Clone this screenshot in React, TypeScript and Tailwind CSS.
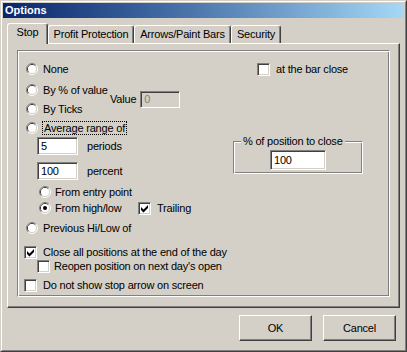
function Radio({ checked = false }: { checked?: boolean }) {
  return (
    <svg width="12" height="12" viewBox="0 0 12 12" className="block shrink-0">
      <path d="M2.11 9.89 A5.5 5.5 0 0 1 9.89 2.11" fill="none" stroke="#808080" />
      <path d="M9.89 2.11 A5.5 5.5 0 0 1 2.11 9.89" fill="none" stroke="#ffffff" />
      <path d="M2.82 9.18 A4.5 4.5 0 0 1 9.18 2.82" fill="none" stroke="#404040" />
      <path d="M9.18 2.82 A4.5 4.5 0 0 1 2.82 9.18" fill="none" stroke="#d4d0c8" />
      <circle cx="6" cy="6" r="4" fill="#ffffff" />
      {checked && <circle cx="6" cy="6" r="2" fill="#000000" />}
    </svg>
  );
}

function Check({ checked = false }: { checked?: boolean }) {
  return (
    <span className="block w-[13px] h-[13px] shrink-0 bg-white border border-t-[#808080] border-l-[#808080] border-r-white border-b-white shadow-[inset_1px_1px_0_#404040,inset_-1px_-1px_0_#d4d0c8]">
      {checked && (
        <svg width="11" height="11" viewBox="0 0 11 11" className="block">
          <polygon points="2,4 4.5,6.5 9,2 9,5 4.5,9.5 2,7" fill="#000000" />
        </svg>
      )}
    </span>
  );
}

function Edit({ value, className = '', disabled = false }: { value: string; className?: string; disabled?: boolean }) {
  return (
    <div
      className={`flex items-center pl-[3px] shrink-0 border border-t-[#808080] border-l-[#808080] border-r-white border-b-white shadow-[inset_1px_1px_0_#404040,inset_-1px_-1px_0_#d4d0c8] ${
        disabled ? 'bg-[#d4d0c8] text-[#808080]' : 'bg-white'
      } ${className}`}
    >
      {value}
    </div>
  );
}

function Tab({ label, active = false, className = '' }: { label: string; active?: boolean; className?: string }) {
  return (
    <div
      className={`flex justify-center pt-[2px] bg-[#d4d0c8] border-t border-l border-r border-white border-r-[#404040] rounded-t-[3px] shadow-[inset_-1px_0_0_#808080] whitespace-nowrap ${
        active ? 'h-[21px] -mb-px relative z-10' : 'h-[18px]'
      } ${className}`}
    >
      {label}
    </div>
  );
}

function Button({ children }: { children: React.ReactNode }) {
  return (
    <button className="w-[73px] h-[26px] flex items-center justify-center bg-[#d4d0c8] border border-t-white border-l-white border-r-[#404040] border-b-[#404040] shadow-[inset_-1px_-1px_0_#808080]">
      {children}
    </button>
  );
}

export default function App() {
  return (
    <div className="w-[407px] h-[352px] bg-[#d4d0c8] text-black font-['Liberation_Sans',Arial,sans-serif] text-[11px] leading-[13px] tracking-[-0.2px] border border-t-[#d4d0c8] border-l-[#d4d0c8] border-r-[#404040] border-b-[#404040]">
      <div className="h-full flex flex-col p-px border border-t-white border-l-white border-r-[#808080] border-b-[#808080]">
        {/* title bar */}
        <div className="h-[15px] shrink-0 flex items-center pl-[2px] bg-gradient-to-r from-[#0a246a] to-[#a6d8f6] text-white font-bold tracking-normal">
          Options
        </div>

        {/* tabs */}
        <div className="mt-[5px] ml-[4px] h-[20px] flex items-end">
          <Tab label="Stop" active className="w-[41px]" />
          <Tab label="Profit Protection" className="w-[86px]" />
          <Tab label="Arrows/Paint Bars" className="w-[97px]" />
          <Tab label="Security" className="w-[50px]" />
        </div>

        <div className="mx-[4px] h-[265px] border border-t-white border-l-white border-r-[#404040] border-b-[#404040] shadow-[inset_-1px_-1px_0_#808080] pt-[6px] px-[9px]">
          <div className="h-[247px] flex border border-t-[#808080] border-l-[#808080] border-r-white border-b-white shadow-[inset_1px_1px_0_#ffffff,inset_-1px_-1px_0_#808080]">
            {/* left column */}
            <div className="w-[215px] shrink-0 pl-[6px] flex flex-col whitespace-nowrap">
              <div className="mt-[11px] ml-[2px] h-[14px] flex items-center gap-[5px]">
                <Radio />
                <span>None</span>
              </div>

              <div className="mt-[7px] flex items-center">
                <div className="w-[84px] ml-[2px] flex flex-col gap-[5px]">
                  <div className="h-[14px] flex items-center gap-[5px]">
                    <Radio />
                    <span>By % of value</span>
                  </div>
                  <div className="h-[14px] flex items-center gap-[5px]">
                    <Radio />
                    <span>By Ticks</span>
                  </div>
                </div>
                <span>Value</span>
                <Edit value="0" disabled className="ml-[4px] w-[40px] h-[17px]" />
              </div>

              <div className="mt-[5px] ml-[2px] h-[14px] flex items-center gap-[4px]">
                <Radio />
                <span className="border border-dotted border-black px-px leading-[12px]">Average range of</span>
              </div>

              <div className="mt-[2px] ml-[13px] flex items-center">
                <Edit value="5" className="w-[41px] h-[18px]" />
                <span className="ml-[9px]">periods</span>
              </div>
              <div className="mt-[7px] ml-[13px] flex items-center">
                <Edit value="100" className="w-[41px] h-[18px]" />
                <span className="ml-[9px]">percent</span>
              </div>

              <div className="mt-[5px] ml-[15px] h-[14px] flex items-center gap-[4px]">
                <Radio />
                <span>From entry point</span>
              </div>
              <div className="mt-[2px] ml-[15px] h-[14px] flex items-center">
                <div className="w-[99px] flex items-center gap-[4px]">
                  <Radio checked />
                  <span>From high/low</span>
                </div>
                <Check checked />
                <span className="ml-[6px]">Trailing</span>
              </div>

              <div className="mt-[6px] ml-[2px] h-[14px] flex items-center gap-[5px]">
                <Radio />
                <span>Previous Hi/Low of</span>
              </div>

              <div className="mt-[10px] h-[14px] flex items-center gap-[6px]">
                <Check checked />
                <span>Close all positions at the end of the day</span>
              </div>
              <div className="ml-[13px] h-[14px] flex items-center gap-[4px]">
                <Check />
                <span>Reopen position on next day's open</span>
              </div>
              <div className="mt-[5px] h-[14px] flex items-center gap-[6px]">
                <Check />
                <span>Do not show stop arrow on screen</span>
              </div>
            </div>

            {/* right column */}
            <div className="flex flex-col whitespace-nowrap">
              <div className="mt-[11px] ml-[24px] h-[14px] flex items-center gap-[6px]">
                <Check />
                <span>at the bar close</span>
              </div>

              <div className="relative mt-[65px] w-[130px] h-[33px] flex justify-center pt-[8px] border border-t-[#808080] border-l-[#808080] border-r-white border-b-white shadow-[inset_1px_1px_0_#ffffff,inset_-1px_-1px_0_#808080]">
                <span className="absolute -top-[7px] left-[7px] px-[2px] bg-[#d4d0c8]">% of position to close</span>
                <Edit value="100" className="w-[56px] h-[20px]" />
              </div>
            </div>
          </div>
        </div>

        {/* buttons */}
        <div className="mt-[7px] pr-[8px] flex justify-end gap-[11px]">
          <Button>OK</Button>
          <Button>Cancel</Button>
        </div>
      </div>
    </div>
  );
}
